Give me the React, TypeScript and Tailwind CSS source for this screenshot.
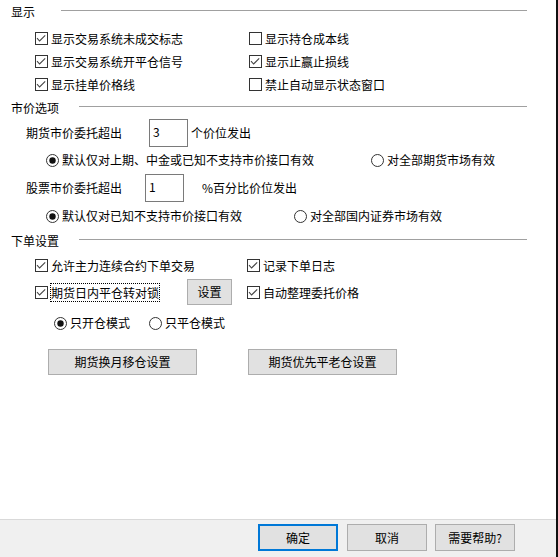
import clsx from 'clsx'

function CheckBox({ checked, label, focus }: { checked?: boolean; label: string; focus?: boolean }) {
  return (
    <div className="flex items-center">
      <svg width="13" height="13" viewBox="0 0 13 13" className="shrink-0">
        <rect x="0.5" y="0.5" width="12" height="12" fill="#fff" stroke="#333" />
        {checked && <path d="M2 6.2l2.6 2.8 5.6-5.6" fill="none" stroke="#444" strokeWidth="1.1" />}
      </svg>
      <span
        className={clsx(
          'ml-[2px] border leading-[17px] whitespace-nowrap',
          focus ? 'border-dotted border-black' : 'border-transparent'
        )}
      >
        {label}
      </span>
    </div>
  )
}

function Radio({ checked, label }: { checked?: boolean; label: string }) {
  return (
    <div className="flex items-center">
      <svg width="13" height="13" viewBox="0 0 13 13" className="shrink-0">
        <circle cx="6.5" cy="6.5" r="6" fill="#fff" stroke="#333" />
        {checked && <circle cx="6.5" cy="6.5" r="3.2" fill="#111" />}
      </svg>
      <span className="ml-[3px] whitespace-nowrap">{label}</span>
    </div>
  )
}

function SectionTitle({ label, wide }: { label: string; wide?: boolean }) {
  return (
    <div className="flex h-[16px] pl-[11px] pr-[29px] leading-[16px]">
      <span className={clsx('shrink-0', wide ? 'w-[68px]' : 'w-[50px]')}>{label}</span>
      <div className="flex-1 h-px bg-[#a0a0a0] mt-[6px]"></div>
    </div>
  )
}

export default function App() {
  return (
    <div className="w-[558px] h-[557px] flex text-[12px] text-black font-['Microsoft_YaHei','Noto_Sans_CJK_SC',sans-serif]">
      <div className="w-[556px] flex flex-col">
        {/* Main content */}
        <div className="h-[519px] bg-white pt-[4px]">
          {/* 显示 */}
          <SectionTitle label="显示" />
          <div className="mt-[7px] pl-[35px] grid grid-cols-[214px_1fr]">
            <div className="h-[23px] flex items-center"><CheckBox checked label="显示交易系统未成交标志" /></div>
            <div className="h-[23px] flex items-center"><CheckBox label="显示持仓成本线" /></div>
            <div className="h-[23px] flex items-center"><CheckBox checked label="显示交易系统开平仓信号" /></div>
            <div className="h-[23px] flex items-center"><CheckBox checked label="显示止赢止损线" /></div>
            <div className="h-[23px] flex items-center"><CheckBox checked label="显示挂单价格线" /></div>
            <div className="h-[23px] flex items-center"><CheckBox label="禁止自动显示状态窗口" /></div>
          </div>

          {/* 市价选项 */}
          <div className="mt-[4px]">
            <SectionTitle label="市价选项" wide />
          </div>
          <div className="mt-[3px] h-[28px] flex items-center pl-[26px]">
            <span className="w-[123px]">期货市价委托超出</span>
            <div className="w-[39px] h-[28px] border border-[#7a7a7a] pl-[3px] pt-[4px] leading-[16px]">3</div>
            <span className="ml-[3px]">个价位发出</span>
          </div>
          <div className="mt-[3px] h-[20px] flex items-center pl-[46px]">
            <div className="w-[325px]"><Radio checked label="默认仅对上期、中金或已知不支持市价接口有效" /></div>
            <Radio label="对全部期货市场有效" />
          </div>
          <div className="mt-[4px] h-[28px] flex items-center pl-[26px]">
            <span className="w-[119px]">股票市价委托超出</span>
            <div className="w-[39px] h-[28px] border border-[#7a7a7a] pl-[3px] pt-[4px] leading-[16px]">1</div>
            <span className="ml-[18px]">%百分比价位发出</span>
          </div>
          <div className="mt-[4px] h-[20px] flex items-center pl-[46px]">
            <div className="w-[248px]"><Radio checked label="默认仅对已知不支持市价接口有效" /></div>
            <Radio label="对全部国内证券市场有效" />
          </div>

          {/* 下单设置 */}
          <div className="mt-[7px]">
            <SectionTitle label="下单设置" wide />
          </div>
          <div className="mt-[5px] h-[23px] pl-[35px] grid grid-cols-[212px_1fr] items-center">
            <CheckBox checked label="允许主力连续合约下单交易" />
            <CheckBox checked label="记录下单日志" />
          </div>
          <div className="mt-[2px] h-[26px] pl-[35px] grid grid-cols-[212px_1fr] items-center">
            <div className="flex items-center">
              <CheckBox checked focus label="期货日内平仓转对锁" />
              <button className="ml-[27px] w-[45px] h-[26px] bg-[#e1e1e1] border border-[#adadad]">设置</button>
            </div>
            <CheckBox checked label="自动整理委托价格" />
          </div>
          <div className="mt-[8px] h-[20px] flex items-center pl-[54px]">
            <div className="w-[95px]"><Radio checked label="只开仓模式" /></div>
            <Radio label="只平仓模式" />
          </div>
          <div className="mt-[16px] flex pl-[48px]">
            <button className="w-[149px] h-[26px] bg-[#e1e1e1] border border-[#adadad]">期货换月移仓设置</button>
            <button className="ml-[51px] w-[149px] h-[26px] bg-[#e1e1e1] border border-[#adadad]">期货优先平老仓设置</button>
          </div>
        </div>

        {/* Footer */}
        <div className="flex-1 border-t border-[#d9d9d9] bg-[#f0f0f0] flex justify-end items-start pt-[4px] pr-[41px]">
          <button className="w-[80px] h-[27px] bg-[#e1e1e1] border-2 border-[#0078d7]">确定</button>
          <button className="ml-[9px] w-[80px] h-[27px] bg-[#e1e1e1] border border-[#adadad]">取消</button>
          <button className="ml-[8px] w-[80px] h-[27px] bg-[#e1e1e1] border border-[#adadad]">需要帮助?</button>
        </div>
      </div>
      <div className="w-[2px] bg-[#111]"></div>
    </div>
  )
}
